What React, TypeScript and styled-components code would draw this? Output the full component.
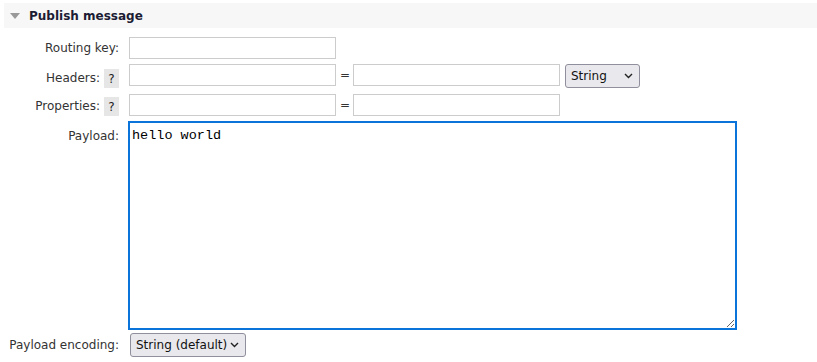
import React from 'react';
import styled, { createGlobalStyle } from 'styled-components';

const GlobalStyle = createGlobalStyle`
  html, body {
    margin: 0;
    padding: 0;
    background: #fff;
  }
  body {
    font-family: "DejaVu Sans", Verdana, sans-serif;
    font-size: 12px;
    color: #333;
  }
`;

const Section = styled.div`
  padding-top: 3px;
`;

const SectionHeader = styled.div`
  display: flex;
  align-items: center;
  height: 25px;
  margin-left: 4px;
  background: #f7f7f7;
  padding-left: 6px;
  gap: 9px;
`;

const Title = styled.h2`
  margin: 0;
  font-size: 12px;
  font-weight: bold;
  color: #1c1c34;
`;

const Form = styled.div`
  display: grid;
  grid-template-columns: 120px auto;
  column-gap: 9px;
  padding-top: 9px;
`;

const Label = styled.div<{ $pad?: number; $h?: number }>`
  display: flex;
  justify-content: flex-end;
  align-items: ${(p) => (p.$pad ? 'flex-start' : 'center')};
  gap: 4px;
  padding-top: ${(p) => p.$pad ?? 0}px;
  padding-right: 1px;
  white-space: nowrap;
  ${(p) => (p.$h ? `height: ${p.$h}px;` : '')}
`;

const LabelText = styled.span`
  line-height: 19px;
`;

const Field = styled.div<{ $h: number }>`
  display: flex;
  align-items: flex-start;
  gap: 4px;
  height: ${(p) => p.$h}px;
`;

const Help = styled.span`
  display: inline-flex;
  align-items: center;
  justify-content: center;
  width: 15px;
  height: 19px;
  background: #e6e6e6;
  color: #222;
  font-size: 12px;
`;

const TextInput = styled.input`
  box-sizing: border-box;
  width: 207px;
  height: 22px;
  margin: 0;
  border: 1px solid #ccc;
  padding: 2px 4px;
  font: inherit;
  outline: none;
`;

const Equals = styled.span`
  width: 9px;
  text-align: center;
  line-height: 22px;
  color: #333;
`;

const SelectWrap = styled.div<{ $w: number }>`
  position: relative;
  width: ${(p) => p.$w}px;
  height: 24px;
  margin-left: 1px;
`;

const Select = styled.select`
  appearance: none;
  box-sizing: border-box;
  width: 100%;
  height: 100%;
  margin: 0;
  padding: 0 0 0 5px;
  border: 1px solid #8f8f9d;
  border-radius: 3px;
  background: #e9e9ed;
  font: inherit;
  font-size: 12px;
  color: #111;
  outline: none;
`;

const Chevron = styled.svg`
  position: absolute;
  right: 7px;
  top: 9px;
  pointer-events: none;
`;

const Payload = styled.textarea`
  box-sizing: border-box;
  width: 609px;
  height: 209px;
  margin: 0 0 0 -1px;
  border: 2px solid #0a74da;
  padding: 5px 2px;
  font-family: "Liberation Mono", "DejaVu Sans Mono", monospace;
  font-size: 13.5px;
  color: #000;
  resize: both;
  outline: none;
`;

const Dropdown: React.FC<{ w: number; options: string[] }> = ({ w, options }) => (
  <SelectWrap $w={w}>
    <Select defaultValue={options[0]}>
      {options.map((o) => (
        <option key={o}>{o}</option>
      ))}
    </Select>
    <Chevron width="9" height="6" viewBox="0 0 9 6">
      <path d="M1 1 L4.5 4.5 L8 1" fill="none" stroke="#222" strokeWidth="1.4" />
    </Chevron>
  </SelectWrap>
);

const Triangle = () => (
  <svg width="10" height="6" viewBox="0 0 10 6">
    <path d="M0 0 H10 L5 6 Z" fill="#999" />
  </svg>
);

export default function App() {
  return (
    <>
      <GlobalStyle />
      <Section>
        <SectionHeader>
          <Triangle />
          <Title>Publish message</Title>
        </SectionHeader>
        <Form>
          <Label $h={22}>Routing key:</Label>
          <Field $h={27}>
            <TextInput />
          </Field>

          <Label $pad={5}>
            <LabelText>Headers:</LabelText>
            <Help>?</Help>
          </Label>
          <Field $h={30}>
            <TextInput />
            <Equals>=</Equals>
            <TextInput />
            <Dropdown w={75} options={['String', 'Number', 'Boolean']} />
          </Field>

          <Label $pad={3}>
            <LabelText>Properties:</LabelText>
            <Help>?</Help>
          </Label>
          <Field $h={27}>
            <TextInput />
            <Equals>=</Equals>
            <TextInput />
          </Field>

          <Label $pad={8}>Payload:</Label>
          <Field $h={212}>
            <Payload defaultValue="hello world" />
          </Field>

          <Label $h={24}>Payload encoding:</Label>
          <Field $h={24}>
            <Dropdown w={116} options={['String (default)', 'Base64']} />
          </Field>
        </Form>
      </Section>
    </>
  );
}
